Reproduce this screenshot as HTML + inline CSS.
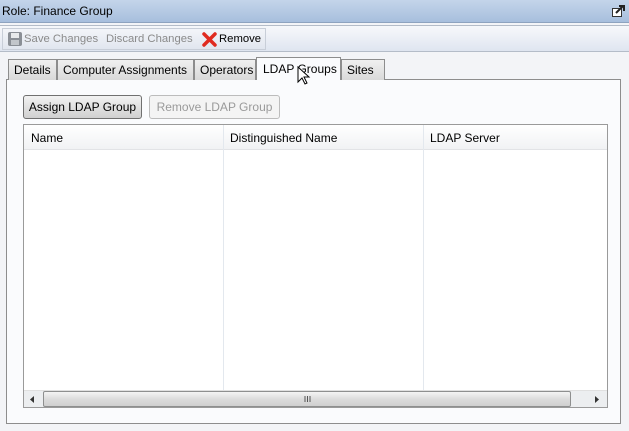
<!DOCTYPE html>
<html><head><meta charset="utf-8"><style>
*{box-sizing:border-box;margin:0;padding:0}
body{width:629px;height:431px;overflow:hidden;background:#f3f4f7;font-family:"Liberation Sans",sans-serif;font-size:12px;color:#000;position:relative}
.abs{position:absolute}
.title{left:0;top:0;width:629px;height:23px;background:linear-gradient(#c4d5ea,#a7bfdd);border-bottom:1px solid #8ea3bf}
.title span{position:absolute;left:2px;top:4px;font-size:12px}
.tb{left:0;top:25px;width:629px;height:27px;background:linear-gradient(#f7f8fb,#dfe5f0);border-top:1px solid #b4bcc8;border-bottom:1px solid #b4bcc8}
.tbin{left:2px;top:2px;width:264px;height:22px;border:1px solid #c8ced8;background:linear-gradient(#f3f5f9,#e1e6ef)}
.tab{top:59px;height:21px;border:1px solid #8d8d8d;border-bottom:none;background:linear-gradient(#f0f0f0,#d9d9d9);padding:3px 0 0 5px;font-size:12px;white-space:nowrap}
.panel{left:6px;top:79px;width:615px;height:345px;border:1px solid #8d8d8d;background:#fafbfd}
.btn{top:95px;height:24px;border:1px solid #707070;border-radius:3px;background:linear-gradient(#f2f2f2,#d0d0d0);font-size:12px;text-align:center;padding-top:4px}
.grid{left:23px;top:124px;width:585px;height:284px;border:1px solid #9a9a9a;background:#fff}
.hdr{left:0;top:0;width:583px;height:25px;background:linear-gradient(#fff,#f1f2f4);border-bottom:1px solid #e2e3e6}
.col{top:0;height:266px;border-left:1px solid #e3e8ee}
.h{top:6px;font-size:12px}
.t{font-size:11.3px;white-space:nowrap}
</style></head><body>
<div class="abs title"><span>Role: Finance Group</span>
<svg class="abs" style="left:612px;top:5px" width="13" height="12"><rect x="0.5" y="3.5" width="9" height="8" fill="#fff" stroke="#333"/><path d="M4 8 L11 1 M7 1 H12 V6" stroke="#222" stroke-width="2" fill="none"/></svg></div>
<div class="abs tb"><div class="abs tbin">
<svg class="abs" style="left:4px;top:2px" width="16" height="16"><rect x="1" y="1" width="14" height="14" rx="2" fill="#8a8f96"/><rect x="4" y="2" width="8" height="5" fill="#e8eaec"/><rect x="4" y="9" width="8" height="5" fill="#c2c6cb"/></svg>
<span class="abs t" style="left:21px;top:4px;color:#8a8a8a">Save Changes</span>
<span class="abs t" style="left:103px;top:4px;color:#8a8a8a">Discard Changes</span>
<svg class="abs" style="left:199px;top:3px" width="15" height="15"><path d="M2 2 L13 13 M13 2 L2 13" stroke="#e02b20" stroke-width="3.5" stroke-linecap="round"/></svg>
<span class="abs t" style="left:216px;top:4px">Remove</span>
</div></div>
<div class="abs panel"></div>
<div class="abs tab" style="left:8px;width:49px">Details</div>
<div class="abs tab" style="left:57px;width:137px">Computer Assignments</div>
<div class="abs tab" style="left:194px;width:62px">Operators</div>
<div class="abs tab" style="left:256px;top:57px;height:23px;width:85px;background:#fafbfd;padding-top:4px;padding-left:6px">LDAP Groups</div>
<div class="abs tab" style="left:341px;width:44px">Sites</div>
<svg class="abs" style="left:297px;top:66px" width="14" height="20"><path d="M1 1 L1 16 L5 12 L8 18 L10 17 L7 11 L12 11 Z" fill="#fff" stroke="#000"/></svg>
<div class="abs btn" style="left:23px;width:119px">Assign LDAP Group</div>
<div class="abs btn" style="left:149px;width:131px;border-color:#bcbcbc;background:#f4f4f4;color:#9a9a9a">Remove LDAP Group</div>
<div class="abs grid">
<div class="abs hdr"></div>
<div class="abs col" style="left:199px"></div>
<div class="abs col" style="left:399px"></div>
<span class="abs h" style="left:7px">Name</span>
<span class="abs h" style="left:206px">Distinguished Name</span>
<span class="abs h" style="left:406px">LDAP Server</span>
<div class="abs" style="left:0;top:265px;width:583px;height:17px;background:#eceef0;border-top:1px solid #e0e0e0">
<svg class="abs" style="left:6px;top:5px" width="5" height="7"><path d="M4 0 L0 3.5 L4 7Z" fill="#333"/></svg>
<div class="abs" style="left:19px;top:0;width:528px;height:16px;border:1px solid #8e8f8f;border-radius:2px;background:linear-gradient(#f4f4f4,#dcdcdc 50%,#cfcfcf)"></div>
<svg class="abs" style="left:280px;top:5px" width="7" height="6"><path d="M1 0V6M3.5 0V6M6 0V6" stroke="#555"/></svg>
<svg class="abs" style="left:571px;top:5px" width="5" height="7"><path d="M0 0 L4 3.5 L0 7Z" fill="#333"/></svg>
</div>
</div>
</body></html>
